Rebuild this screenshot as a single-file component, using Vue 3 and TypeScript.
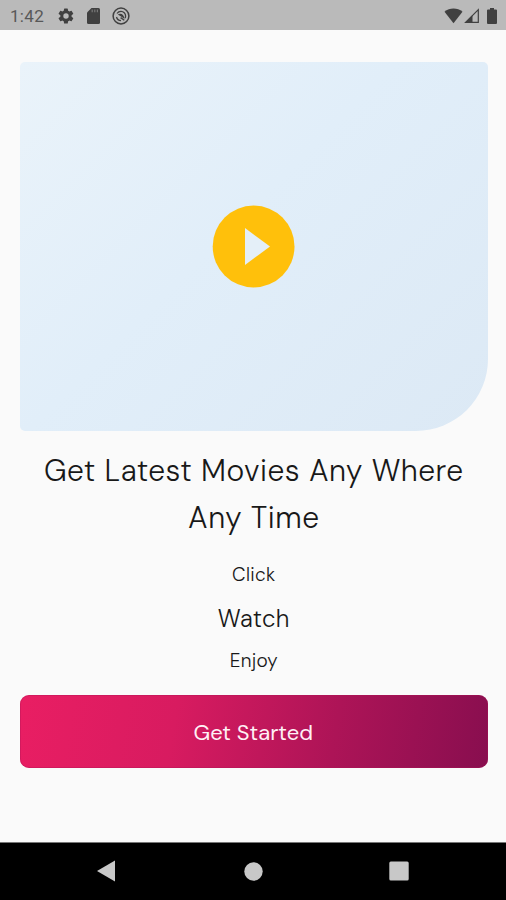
<script setup lang="ts">
interface Step {
  label: string
  kind: 'small' | 'large'
}

const headline: string[] = ['Get Latest Movies Any Where', 'Any Time']
const steps: Step[] = [
  { label: 'Click', kind: 'small' },
  { label: 'Watch', kind: 'large' },
  { label: 'Enjoy', kind: 'small' },
]
</script>

<template>
  <div class="screen">
    <header class="status">
      <span class="clock">1:42</span>
      <svg class="gear" viewBox="0 0 24 24" fill="#404040">
        <path fill-rule="evenodd" d="M19.4 13a7.6 7.6 0 0 0 0-2l2.1-1.6a.5.5 0 0 0 .1-.7l-2-3.4a.5.5 0 0 0-.6-.2l-2.5 1a7.4 7.4 0 0 0-1.7-1l-.4-2.6a.5.5 0 0 0-.5-.5h-4a.5.5 0 0 0-.5.5L9 5.1a7.4 7.4 0 0 0-1.7 1l-2.5-1a.5.5 0 0 0-.6.2l-2 3.4a.5.5 0 0 0 .1.7L4.5 11a7.6 7.6 0 0 0 0 2l-2.2 1.6a.5.5 0 0 0-.1.7l2 3.4c.1.2.4.3.6.2l2.5-1c.5.4 1.1.7 1.7 1l.4 2.6c0 .3.2.5.5.5h4c.3 0 .5-.2.5-.5l.4-2.6a7.4 7.4 0 0 0 1.7-1l2.5 1c.2.1.5 0 .6-.2l2-3.4a.5.5 0 0 0-.1-.7zM12 15.6a3.6 3.6 0 1 1 0-7.2 3.6 3.6 0 0 1 0 7.2z" />
      </svg>
      <svg class="card-icon" viewBox="0 0 13 16">
        <path d="M4.5 0H11.5a1.5 1.5 0 0 1 1.5 1.5V14.5a1.5 1.5 0 0 1-1.5 1.5H1.5A1.5 1.5 0 0 1 0 14.5V4.5z" fill="#404040" />
        <path d="M5.2 1.4V4.2M7.8 1.4V4.2M10.4 1.4V4.2" stroke="#777" stroke-width="1.2" />
      </svg>
      <svg class="ring" viewBox="0 0 18 18" fill="none" stroke="#404040">
        <circle cx="9" cy="9" r="7.9" stroke-width="1.5" />
        <path d="M5 6.5C5.900 5.200 7.300 4.400 9 4.400A4.600 4.600 0 0 1 13.600 9c0 .8-.2 1.500-.5 2.100M4.500 10A4.600 4.600 0 0 0 9 13.600" stroke-width="1.300" />
        <path d="M5.800 7.600C8.500 5.800 12 7.200 12.600 12L9.800 9.900z" fill="#404040" stroke="none" />
        <path d="M8.600 10.600L12.300 13.300" stroke-width="1.300" />
      </svg>
      <div class="signals">
        <svg class="wifi" viewBox="0 0 19 16"><path d="M9.500 15.200L.5 3.800C5.600-.5 13.400-.5 18.500 3.800z" fill="#404040" /></svg>
        <svg class="cell" viewBox="0 0 15 15">
          <path d="M1.700 14.300H14.300V1.700z" fill="none" stroke="#404040" stroke-width="1.200" />
          <path d="M.5 14.900L8.500 7V14.900z" fill="#404040" />
        </svg>
        <svg class="battery" viewBox="0 0 10 16"><path d="M3 0H7V1.500H9A1 1 0 0 1 10 2.500V15A1 1 0 0 1 9 16H1A1 1 0 0 1 0 15V2.500A1 1 0 0 1 1 1.500H3z" fill="#404040" /></svg>
      </div>
    </header>

    <main class="content">
      <section class="preview">
        <svg class="play" viewBox="0 0 83 83">
          <circle cx="41.600" cy="41.500" r="40.900" fill="#ffc00b" />
          <path d="M33 23V60L58 41.500z" fill="#e4eff8" />
        </svg>
      </section>
      <h1 class="headline">
        <span v-for="line in headline" :key="line" class="line">{{ line }}</span>
      </h1>
      <p v-for="step in steps" :key="step.label" :class="['step', step.kind]">{{ step.label }}</p>
      <button class="start" type="button"><span>Get Started</span></button>
    </main>

    <nav class="nav">
      <svg class="back" viewBox="0 0 18 22"><path d="M0 11L18 .5V21.500z" fill="#c8c8c8" /></svg>
      <svg class="home" viewBox="0 0 19 19"><circle cx="9.500" cy="9.500" r="9.200" fill="#c8c8c8" /></svg>
      <svg class="recent" viewBox="0 0 20 20"><rect x=".3" y=".5" width="19.400" height="19" rx="1.500" fill="#c8c8c8" /></svg>
    </nav>
  </div>
</template>

<style>
body {
  background: #fafafa;
}
</style>

<style scoped>
.screen {
  width: 506px;
  height: 900px;
  display: flex;
  flex-direction: column;
  overflow: hidden;
  background: #fafafa;
  color: #181818;
  font-family: 'DM Sans', Inter, sans-serif;
}
svg {
  display: block;
  flex: none;
}
.status {
  height: 30px;
  flex: none;
  box-sizing: border-box;
  display: flex;
  align-items: center;
  padding: 1px 9px 0 10px;
  background: #bababa;
}
.clock {
  width: 47px;
  font: 400 17px/20px Roboto, sans-serif;
  letter-spacing: 0.300px;
  color: #585858;
}
.gear {
  width: 18px;
  height: 18px;
}
.card-icon {
  width: 13px;
  height: 16px;
  margin-left: 12px;
}
.ring {
  width: 18px;
  height: 18px;
  margin-left: 12px;
}
.signals {
  display: flex;
  align-items: center;
  margin-left: auto;
}
.wifi {
  width: 19px;
  height: 16px;
}
.cell {
  width: 15px;
  height: 15px;
  margin-left: 1px;
}
.battery {
  width: 10px;
  height: 16px;
  margin-left: 8px;
}
.content {
  flex: 1;
  display: flex;
  flex-direction: column;
  align-items: stretch;
  padding: 32px 18.500px 0 20px;
}
.preview {
  height: 369px;
  flex: none;
  display: flex;
  align-items: center;
  justify-content: center;
  border-radius: 5px 5px 72px 5px;
  background: linear-gradient(135deg, #eaf3fa 0%, #e1eef9 45%, #dce9f5 100%);
}
.play {
  width: 83px;
  height: 83px;
}
.headline {
  margin: 16px 0 0;
  display: flex;
  flex-direction: column;
  align-items: center;
  font-size: 30px;
  font-weight: 300;
}
.line {
  line-height: 47px;
  letter-spacing: 0.520px;
  white-space: nowrap;
}
.step {
  margin: 0;
  text-align: center;
  font-weight: 300;
}
.small {
  font-size: 19px;
  line-height: 42px;
  letter-spacing: 0.300px;
}
.small:first-of-type {
  margin-top: 13px;
}
.large {
  padding-top: 1px;
  font-size: 24px;
  line-height: 43px;
  letter-spacing: 0.400px;
  font-weight: 350;
}
.start {
  margin: 13px 0 0;
  padding: 2px 1px 0 0;
  height: 73px;
  flex: none;
  border: 0;
  border-radius: 9px;
  background: linear-gradient(100deg, #e91e63 0%, #d81b60 33%, #ad1457 67%, #880e4f 100%);
  box-shadow: inset 0 0 0 1px rgba(173, 20, 87, 0.350);
  color: #fff0f5;
  font: 450 22px/30px 'DM Sans', Inter, sans-serif;
}
.nav {
  height: 58px;
  flex: none;
  box-sizing: border-box;
  border-top: 1px solid #777;
  background: #000;
  display: flex;
  align-items: center;
  padding: 0 0 1px 97px;
}
.back {
  width: 18px;
  height: 22px;
}
.home {
  width: 19px;
  height: 19px;
  margin-left: 129px;
}
.recent {
  width: 20px;
  height: 20px;
  margin-left: 126px;
}
</style>
